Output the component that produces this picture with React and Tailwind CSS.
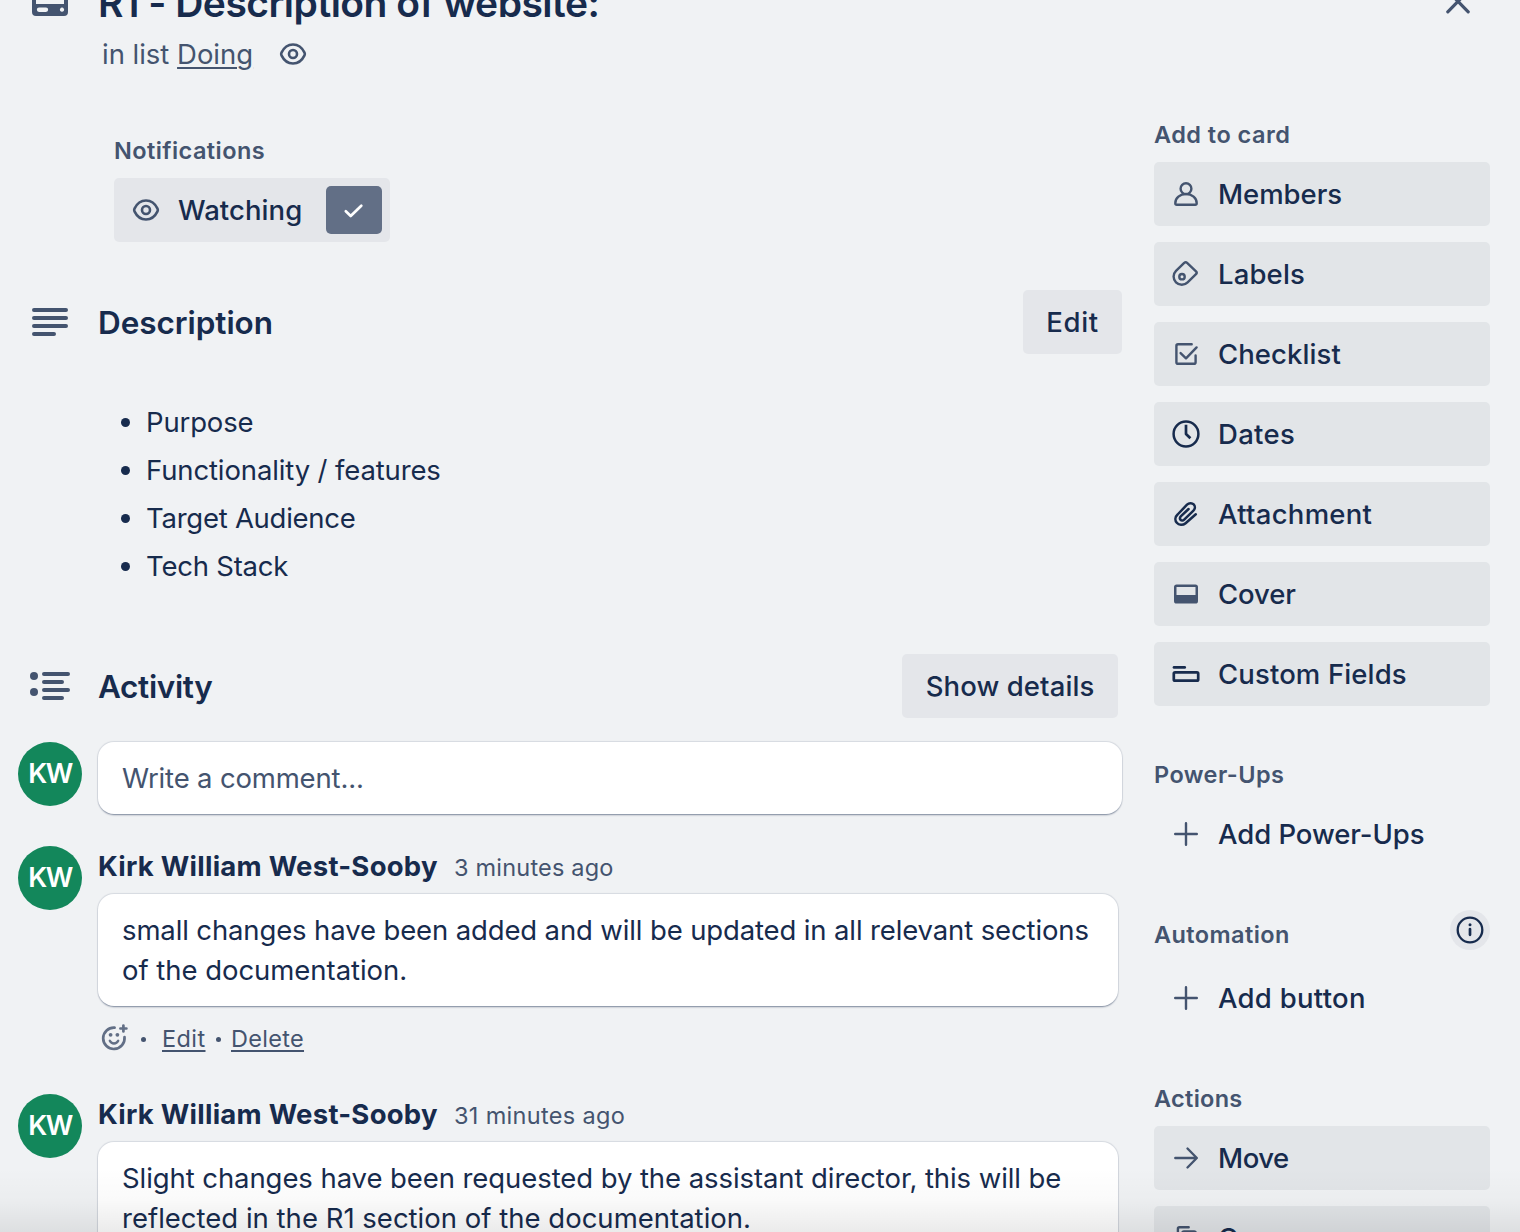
import React from "react";

const Svg = ({ children, className = "size-8", box = "0 0 32 32" }) => (
  <svg viewBox={box} className={`shrink-0 ${className}`} fill="none" stroke="currentColor" strokeWidth="2.4" strokeLinecap="round" strokeLinejoin="round">
    {children}
  </svg>
);

const Eye = () => (
  <Svg className="size-8 text-[#44546f]">
    <path strokeWidth="2.6" d="M4.500 14.600C7 9.400 11.200 6.500 16 6.500S25 9.400 27.500 14.600Q28.200 16 27.500 17.400C25 22.600 20.800 25.500 16 25.500S7 22.600 4.500 17.400Q3.800 16 4.500 14.600Z" />
    <circle cx="16" cy="16" r="4" strokeWidth="2.6" />
  </Svg>
);

const icons = {
  members: <><circle cx="16" cy="10.700" r="5.400" /><path d="M5.300 25.200C5.300 20 10 16 16 16S26.700 20 26.700 25.200Q26.700 26.700 25.200 26.700H6.800Q5.300 26.700 5.300 25.200Z" /></>,
  labels: <><path d="M6 12.800L14.200 4.800Q15.700 3.500 17.100 4.800L26 13.300Q27.400 14.700 26 16.200L17.600 24.400A8.200 8.200 0 0 1 6 12.800Z" /><circle cx="12" cy="18.700" r="2.700" /></>,
  checklist: <><path d="M21.700 6.300H8Q6.400 6.300 6.400 7.900V24.200Q6.400 25.800 8 25.800H24Q25.600 25.800 25.600 24.200V17.500" /><path d="M10.600 15.100L16 20.300L26.600 9.400" /></>,
  dates: <><circle cx="16" cy="16" r="12.400" strokeWidth="2.500" /><path strokeLinecap="butt" strokeWidth="2.700" d="M16 6.700V16L20.400 20.300" /></>,
  attachment: <path strokeWidth="2.500" d="M25.800 16.300L15.600 25.200C12.800 27.600 8.900 27.300 6.800 24.800C4.700 22.300 5 18.900 7.600 16.500L17 6.700C19 4.800 22 4.600 23.700 6.400C25.400 8.200 25.200 11 23.200 12.900L14.200 21.600C13 22.800 11.500 22.800 10.600 21.800C9.700 20.800 9.900 19.300 11 18.200L18.600 11" />,
  cover: <path fill="currentColor" stroke="none" fillRule="evenodd" d="M6.600 6.400H25.400Q28 6.400 28 9V23Q28 25.600 25.400 25.600H6.600Q4 25.600 4 23V9Q4 6.400 6.600 6.400ZM6.500 9V17H25.500V9Z" />,
  fields: <><path d="M4 9.400H14.700" strokeWidth="2.700" /><rect x="3.800" y="14.300" width="24.400" height="8.400" rx="1.300" strokeWidth="2.700" /></>,
  plus: <path d="M5.200 16H26.800M16 5.200V26.800" />,
  move: <path d="M5.300 16H26.700M17.500 6.500L26.800 16L17.500 25.500" />,
  copy: <><path d="M18.700 5.200H9.500Q7.900 5.200 7.900 6.800V20" /><rect x="12.300" y="9.400" width="13.500" height="17" rx="1.600" /></>,
};

const SideButton = ({ icon, label, track, dark, plain }) => (
  <button className={`flex h-16 w-full shrink-0 items-center gap-4 rounded-[5px] pl-4 text-left text-[27.5px] font-medium ${plain ? "" : "bg-[#e2e5e8]"}`}>
    <Svg className={`size-8 ${dark ? "text-[#172b4d]" : "text-[#44546f]"}`}>{icons[icon]}</Svg>
    <span className={`leading-10 whitespace-nowrap ${track}`}>{label}</span>
  </button>
);

const SideHeading = ({ children, track }) => (
  <h3 className={`h-10 text-[23.5px] leading-[42px] font-semibold text-[#44546f] ${track}`}>{children}</h3>
);

const Avatar = () => (
  <div className="flex size-16 shrink-0 items-center justify-center rounded-full bg-[#13875b] text-[27px] font-semibold tracking-[-1.5px] text-white">
    <span className="leading-10">KW</span>
  </div>
);

const Bubble = ({ className, children }) => (
  <div className={`rounded-2xl bg-white px-6 text-[27.5px] leading-10 shadow-[0_2px_2px_-1px_#091e4270,0_0_1px_1px_#091e421c] ${className}`}>
    {children}
  </div>
);

const Comment = ({ time, timeTrack, lines }) => (
  <article className="flex h-[248px] shrink-0 gap-4">
    <Avatar />
    <div className="w-[1020px]">
      <div className="flex h-10 items-baseline leading-10">
        <span className="w-[356px] text-[27.5px] font-bold tracking-[0.25px]">Kirk William West-Sooby</span>
        <span className={`text-[23.5px] text-[#44546f] ${timeTrack}`}>{time}</span>
      </div>
      <Bubble className="mt-2 h-28 pt-4">
        {lines.map(([text, track]) => (
          <p key={text} className={`whitespace-nowrap ${track}`}>{text}</p>
        ))}
      </Bubble>
      <div className="mt-3 flex h-10 items-center text-[23.5px] text-[#44546f]">
        <Svg className="size-8 text-[#626f86]">
          <path strokeWidth="2.700" d="M16.600 5.600A10.700 10.700 0 1 0 26.500 15" />
          <path strokeWidth="2.700" d="M25.400 3.500V9.500M22.400 6.500H28.400" />
          <path strokeWidth="2.400" d="M11.800 18.800Q13.200 21.500 16 21.500T20.200 18.800" />
          <circle cx="12.600" cy="12.800" r="1.900" fill="currentColor" stroke="none" />
          <circle cx="19.400" cy="12.800" r="1.900" fill="currentColor" stroke="none" />
        </Svg>
        <span className="mt-0.5 ml-[11px] size-[5px] rounded-full bg-[#44546f]" />
        <a className="ml-4 w-[44px] pt-0.5 tracking-[0.4px] underline decoration-2 underline-offset-[3px]">Edit</a>
        <span className="mt-0.5 ml-[10px] size-[5px] rounded-full bg-[#44546f]" />
        <a className="ml-[10px] pt-0.5 tracking-[0.3px] underline decoration-2 underline-offset-[3px]">Delete</a>
      </div>
    </div>
  </article>
);

const bullets = [
  ["Purpose", "tracking-[-0.15px]"],
  ["Functionality / features", "tracking-[-0.13px]"],
  ["Target Audience", "tracking-[-0.26px]"],
  ["Tech Stack", "tracking-[-0.22px]"],
];

export default function App() {
  return (
    <div className="relative flex h-[1232px] w-[1520px] overflow-hidden bg-[#f0f2f4] font-[Inter,sans-serif] text-[#172b4d]">
      <main className="flex w-[1154px] shrink-0 flex-col pl-[18px]">
        <header className="-mt-[21px] flex h-[95px] shrink-0 gap-4">
          <div className="w-16 pt-[5px] pl-3.5">
            <svg viewBox="0 0 36 32" className="h-8 w-9 text-[#44546f]" fill="currentColor">
              <path fillRule="evenodd" d="M4 0H32Q36 0 36 4V28Q36 32 32 32H4Q0 32 0 28V4Q0 0 4 0ZM4 4V20H32V4ZM7 23.600A2.100 2.100 0 0 0 7 27.900H14A2.100 2.100 0 0 0 14 23.600ZM30 23.600A2.100 2.100 0 1 0 30.010 23.600Z" />
            </svg>
          </div>
          <div>
            <h1 className="h-12 text-[39px] leading-[48px] font-semibold tracking-[-0.51px] whitespace-nowrap">R1 - Description of website:</h1>
            <div className="mt-[7px] flex h-10 items-center pl-1 text-[27.5px] text-[#44546f]">
              <span className="w-[151px] pt-0.5 tracking-[-0.02px] whitespace-nowrap">in list <a className="underline decoration-2 underline-offset-[3px]">Doing</a></span>
              <span className="ml-6"><Eye /></span>
            </div>
          </div>
        </header>

        <section className="mt-14 ml-24 h-[112px] shrink-0">
          <h3 className="h-10 text-[23.5px] leading-[42px] font-semibold tracking-[0.43px] text-[#44546f]">Notifications</h3>
          <button className="mt-2 flex h-16 w-[276px] items-center rounded-[5px] bg-[#e4e6ea] px-4 text-[27.5px] font-medium">
            <Eye />
            <span className="ml-4 leading-10 tracking-[0.07px]">Watching</span>
            <span className="-mr-2 ml-auto flex h-12 w-14 items-center justify-center rounded-[5px] bg-[#626f86] text-white">
              <Svg><path strokeWidth="2.700" d="M7.800 17.300L12.700 22L23.300 11.800" /></Svg>
            </span>
          </button>
        </section>

        <section className="mt-12 h-[300px] shrink-0">
          <div className="flex h-16 items-center">
            <Svg box="0 0 40 40" className="ml-3 size-10 text-[#44546f]">
              <path strokeWidth="4" d="M4 8H36M4 16H36M4 24H36M4 32H24" />
            </Svg>
            <h2 className="ml-7 pt-0.5 text-[31.5px] leading-10 font-semibold tracking-[-0.06px]">Description</h2>
            <button className="mr-8 ml-auto h-16 w-[99px] rounded-[5px] bg-[#e4e6ea] pt-0.5 text-[27.5px] font-medium tracking-[0.6px]">Edit</button>
          </div>
          <ul className="mt-11 ml-[103px]">
            {bullets.map(([text, track]) => (
              <li key={text} className="flex h-12 items-center text-[27.5px]">
                <span className="mr-4 size-[9px] rounded-full bg-[#172b4d]" />
                <span className={`leading-10 ${track}`}>{text}</span>
              </li>
            ))}
          </ul>
        </section>

        <section className="mt-16 shrink-0">
          <div className="flex h-16 items-center">
            <Svg box="0 0 40 40" className="ml-3 size-10 text-[#44546f]">
              <path strokeWidth="4" d="M14 8H38M14 16H32M14 24H38M14 32H32" />
              <circle cx="4" cy="10" r="4" fill="currentColor" stroke="none" />
              <circle cx="4" cy="26" r="4" fill="currentColor" stroke="none" />
            </Svg>
            <h2 className="ml-7 pt-0.5 text-[31.5px] leading-10 font-semibold tracking-[-0.34px]">Activity</h2>
            <button className="mr-9 ml-auto h-16 w-[216px] rounded-[5px] bg-[#e4e6ea] pt-0.5 text-[27.5px] font-medium tracking-[0.1px]">Show details</button>
          </div>
          <div className="mt-6 flex h-[104px] gap-4">
            <Avatar />
            <Bubble className="flex h-[72px] w-[1024px] items-center tracking-[-0.17px] text-[#44546f]">Write a comment...</Bubble>
          </div>
          <Comment
            time="3 minutes ago"
            timeTrack="tracking-[0.2px]"
            lines={[
              ["small changes have been added and will be updated in all relevant sections", "tracking-[-0.13px]"],
              ["of the documentation.", "tracking-[-0.04px]"],
            ]}
          />
          <Comment
            time="31 minutes ago"
            timeTrack="tracking-[0.32px]"
            lines={[
              ["Slight changes have been requested by the assistant director, this will be", "tracking-[-0.078px]"],
              ["reflected in the R1 section of the documentation.", "tracking-[0.01px]"],
            ]}
          />
        </section>
      </main>

      <aside className="flex w-[336px] shrink-0 flex-col">
        <div className="flex h-[114px] shrink-0 justify-end pr-4">
          <svg viewBox="0 0 32 32" className="-mt-3.5 size-8 text-[#44546f]" fill="none" stroke="currentColor" strokeWidth="3.200" strokeLinecap="round">
            <path d="M5.800 5L26.200 25.800M26.200 5L5.800 25.800" />
          </svg>
        </div>
        <section className="flex shrink-0 flex-col">
          <SideHeading track="tracking-[0.47px]">Add to card</SideHeading>
          <div className="mt-2 flex flex-col gap-4">
            <SideButton icon="members" label="Members" track="tracking-[-0.02px]" />
            <SideButton icon="labels" label="Labels" track="tracking-[0.15px]" />
            <SideButton icon="checklist" label="Checklist" track="tracking-[0.08px]" />
            <SideButton icon="dates" label="Dates" track="tracking-[0.3px]" dark />
            <SideButton icon="attachment" label="Attachment" track="tracking-[0.27px]" dark />
            <SideButton icon="cover" label="Cover" track="tracking-[-0.1px]" />
            <SideButton icon="fields" label="Custom Fields" track="tracking-[0.13px]" dark />
          </div>
        </section>
        <section className="mt-12 shrink-0">
          <SideHeading track="tracking-[0.43px]">Power-Ups</SideHeading>
          <div className="mt-2"><SideButton icon="plus" label="Add Power-Ups" track="tracking-[-0.05px]" plain /></div>
        </section>
        <section className="mt-12 shrink-0">
          <div className="flex justify-between">
            <SideHeading track="tracking-[0.42px]">Automation</SideHeading>
            <span className="-mt-1 flex size-10 items-center justify-center rounded-full bg-[#e4e6ea]">
              <Svg>
                <circle cx="16" cy="16" r="12.300" strokeWidth="2.300" />
                <circle cx="16" cy="10.700" r="1.500" fill="currentColor" stroke="none" />
                <path d="M16 15V20.800" strokeWidth="2.700" />
              </Svg>
            </span>
          </div>
          <div className="mt-3"><SideButton icon="plus" label="Add button" track="tracking-[0.27px]" plain /></div>
        </section>
        <section className="mt-12 shrink-0">
          <SideHeading track="tracking-[0.3px]">Actions</SideHeading>
          <div className="mt-2 flex flex-col gap-4">
            <SideButton icon="move" label="Move" track="tracking-[-0.45px]" />
            <SideButton icon="copy" label="Copy" track="tracking-[0.1px]" />
          </div>
        </section>
      </aside>

      <div className="pointer-events-none absolute inset-x-0 bottom-0 h-16 bg-linear-to-b from-transparent via-black/2 to-black/8" />
    </div>
  );
}
